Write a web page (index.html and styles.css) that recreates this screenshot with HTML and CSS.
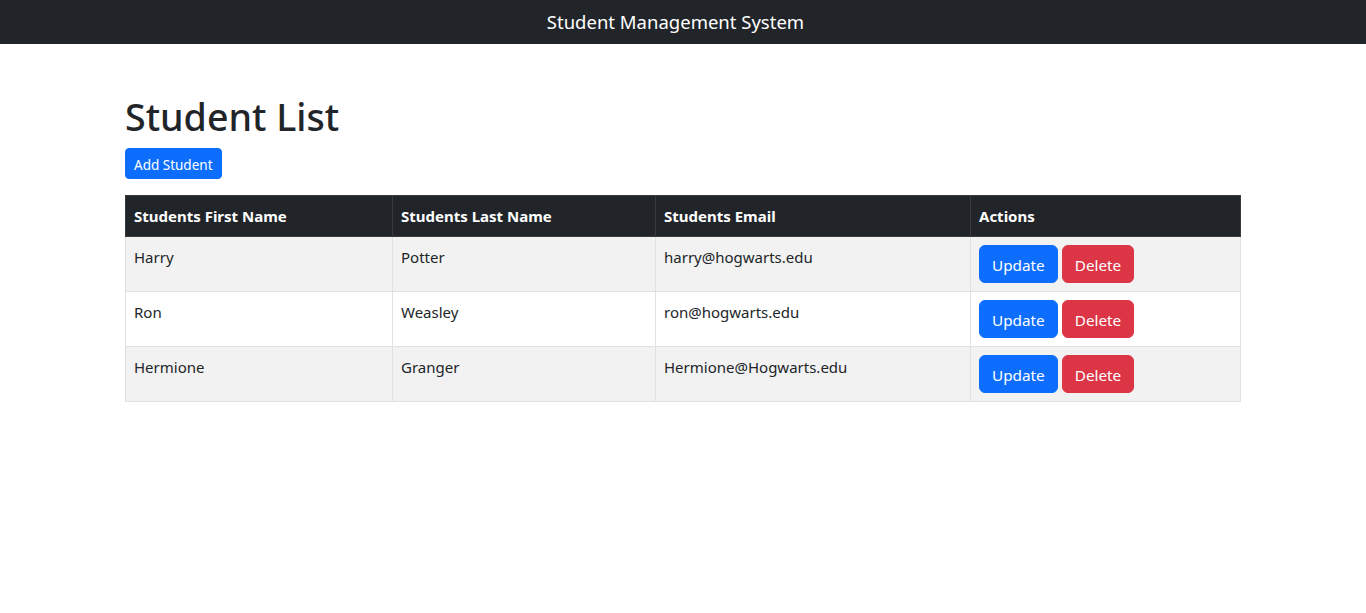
FILE: index.html
```html
<!DOCTYPE html>
<html lang="en">
<head>
<meta charset="utf-8">
<title>Student Management System</title>
<link rel="stylesheet" href="styles.css">
</head>
<body>
<header class="navbar">
  <span class="brand">Student Management System</span>
</header>
<main class="container">
  <h1 class="title">Student List</h1>
  <button class="btn btn-primary btn-sm add">Add Student</button>
  <table class="table">
    <colgroup>
      <col class="c1"><col class="c2"><col class="c3"><col class="c4">
    </colgroup>
    <thead>
      <tr>
        <th>Students First Name</th>
        <th>Students Last Name</th>
        <th>Students Email</th>
        <th>Actions</th>
      </tr>
    </thead>
    <tbody>
      <tr class="odd">
        <td>Harry</td><td>Potter</td><td>harry@hogwarts.edu</td>
        <td class="actions"><button class="btn btn-primary">Update</button><button class="btn btn-danger">Delete</button></td>
      </tr>
      <tr>
        <td>Ron</td><td>Weasley</td><td>ron@hogwarts.edu</td>
        <td class="actions"><button class="btn btn-primary">Update</button><button class="btn btn-danger">Delete</button></td>
      </tr>
      <tr class="odd">
        <td>Hermione</td><td>Granger</td><td>Hermione@Hogwarts.edu</td>
        <td class="actions"><button class="btn btn-primary">Update</button><button class="btn btn-danger">Delete</button></td>
      </tr>
    </tbody>
  </table>
</main>
</body>
</html>
```
FILE: styles.css
```css
* { box-sizing: border-box; }
html, body { margin: 0; padding: 0; }
body {
  font-family: "Noto Sans", "Open Sans", sans-serif;
  font-size: 16px;
  line-height: 1.5;
  color: #212529;
  background: #fff;
}
.navbar {
  height: 44px;
  background: #212529;
  display: flex;
  align-items: center;
  justify-content: center;
}
.brand {
  color: #fff;
  font-size: 18.5px;
  line-height: 30px;
  margin-right: 15px;
}
.container {
  width: 1116px;
  margin: 48px auto 0;
}
.title {
  margin: 0 0 8px;
  font-size: 37.6px;
  font-weight: 500;
  line-height: 48px;
  padding-top: 1px;
  height: 48px;
}
.btn {
  display: inline-block;
  font-family: inherit;
  font-size: 15.3px;
  line-height: 24px;
  padding: 7px 12px 5px;
  border: 1px solid transparent;
  border-radius: 6px;
  color: #fff;
  cursor: pointer;
}
.btn-primary { background: #0d6efd; border-color: #0d6efd; }
.btn-danger { background: #dc3545; border-color: #dc3545; }
.btn-sm {
  font-size: 13.5px;
  line-height: 21px;
  padding: 6px 8px 2px;
  border-radius: 4px;
}
.add { display: block; margin-bottom: 16px; }
.table {
  width: 1115px;
  border-collapse: collapse;
  table-layout: fixed;
}
.c1 { width: 267px; }
.c2 { width: 263px; }
.c3 { width: 315px; }
.c4 { width: 270px; }
.table th, .table td {
  padding: 9px 8px 7px;
  text-align: left;
  vertical-align: top;
  font-size: 15px;
  border: 1px solid #dee2e6;
}
.table th {
  background: #212529;
  color: #fff;
  font-weight: 700;
  border-color: #373b3e;
  padding-bottom: 8px;
}
.table td { color: #212529; }
.table tr.odd td { background: #f2f2f2; }
.actions .btn { margin-right: 4px; }
.table td.actions { padding-top: 8px; padding-bottom: 8px; }
```
